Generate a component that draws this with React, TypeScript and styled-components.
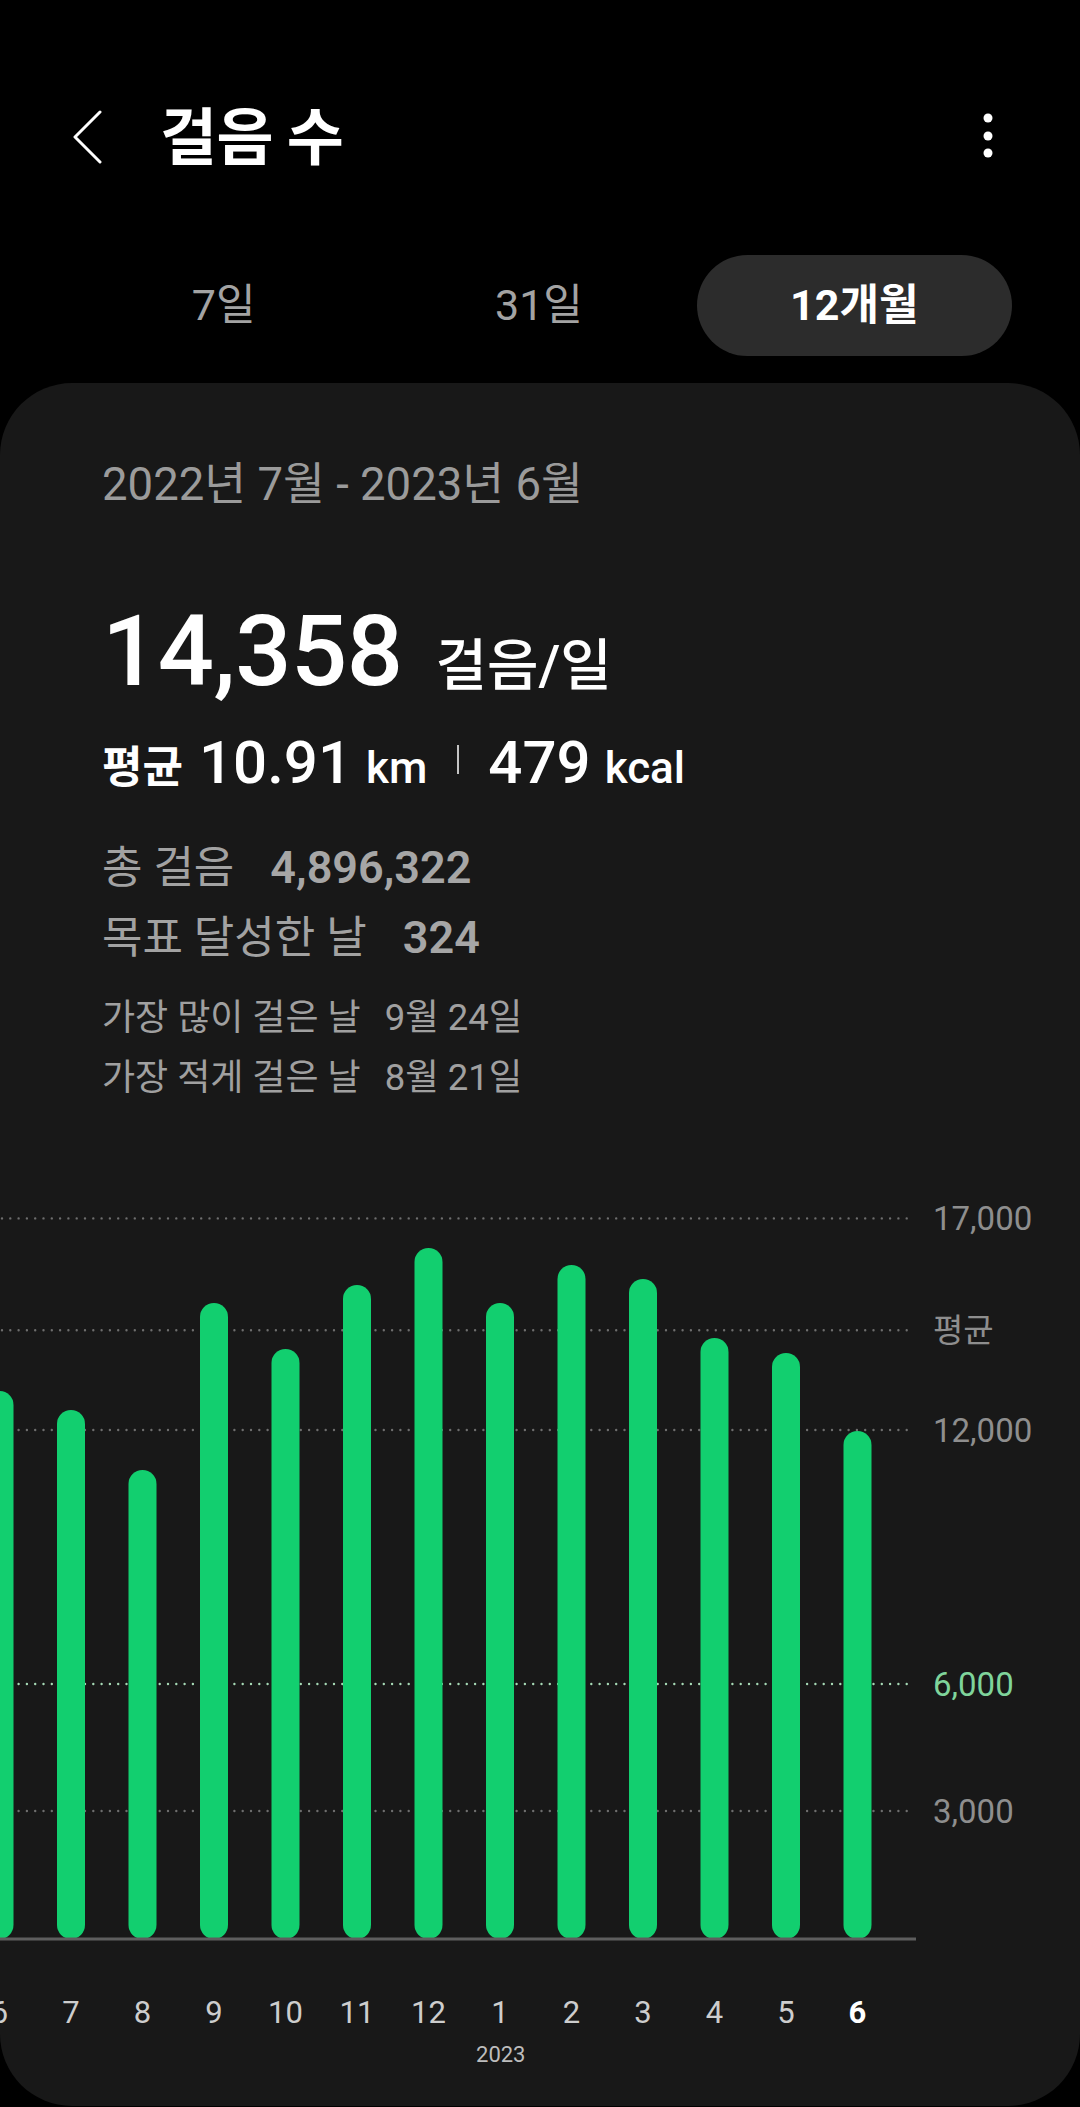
import React from 'react';
import styled, { createGlobalStyle } from 'styled-components';

const GlobalStyle = createGlobalStyle`
  html, body {
    margin: 0;
    padding: 0;
    background: #000;
  }
  body {
    font-family: Roboto, "Noto Sans CJK KR", sans-serif;
    color: #fff;
  }
  #root {
    min-height: 2107px;
  }
`;

// chart scale: px per step, baseline at y=749 inside the plot svg
const PLOT_BASE = 749;
const PX_PER_STEP = 0.04233;
const AVERAGE = 14358;
const BAR_STEP = 71.5;
const FIRST_CENTER = -0.5;

const months = [
  { label: '6', value: 12922 },
  { label: '7', value: 12473 },
  { label: '8', value: 11056 },
  { label: '9', value: 15001 },
  { label: '10', value: 13914 },
  { label: '11', value: 15426 },
  { label: '12', value: 16300 },
  { label: '1', value: 15001 },
  { label: '2', value: 15899 },
  { label: '3', value: 15568 },
  { label: '4', value: 14174 },
  { label: '5', value: 13820 },
  { label: '6', value: 11977 },
];

const gridLines = [
  { value: 17000, text: '17,000', goal: false },
  { value: AVERAGE, text: '평균', goal: false },
  { value: 12000, text: '12,000', goal: false },
  { value: 6000, text: '6,000', goal: true },
  { value: 3000, text: '3,000', goal: false },
];

const toY = (v: number) => PLOT_BASE - v * PX_PER_STEP;

function App() {
  return (
    <>
      <GlobalStyle />
      <Page>
        <Header>
          <BackButton aria-label="뒤로">
            <svg width="32" height="54" viewBox="0 0 32 54">
              <path
                d="M28 2 L3 27 L28 52"
                fill="none"
                stroke="#fff"
                strokeWidth="3"
                strokeLinecap="round"
                strokeLinejoin="round"
              />
            </svg>
          </BackButton>
          <Title>걸음 수</Title>
          <MoreButton aria-label="더보기">
            <svg width="12" height="48" viewBox="0 0 12 48">
              <circle cx="6" cy="6" r="4.5" fill="#fff" />
              <circle cx="6" cy="24" r="4.5" fill="#fff" />
              <circle cx="6" cy="41" r="4.5" fill="#fff" />
            </svg>
          </MoreButton>
        </Header>

        <Tabs>
          <Tab>7일</Tab>
          <Tab>31일</Tab>
          <Tab $active>12개월</Tab>
        </Tabs>

        <Card>
          <Summary>
            <DateRange>2022년 7월 - 2023년 6월</DateRange>

            <HeadlineRow>
              <BigNumber>14,358</BigNumber>
              <BigUnit>걸음/일</BigUnit>
            </HeadlineRow>

            <StatsRow>
              <StatLabel>평균</StatLabel>
              <StatValue>10.91</StatValue>
              <StatUnit>km</StatUnit>
              <Divider />
              <StatValue>479</StatValue>
              <StatUnit>kcal</StatUnit>
            </StatsRow>

            <TotalRow $first>
              <TotalLabel>총 걸음</TotalLabel>
              <TotalValue>4,896,322</TotalValue>
            </TotalRow>
            <TotalRow>
              <TotalLabel>목표 달성한 날</TotalLabel>
              <TotalValue>324</TotalValue>
            </TotalRow>

            <ExtremeRow $first>
              <span>가장 많이 걸은 날</span>
              <ExtremeDate>9월 24일</ExtremeDate>
            </ExtremeRow>
            <ExtremeRow>
              <span>가장 적게 걸은 날</span>
              <ExtremeDate>8월 21일</ExtremeDate>
            </ExtremeRow>
          </Summary>

          <Plot width="1080" height="755" viewBox="0 0 1080 755">
            {gridLines.map((g) => (
              <line
                key={g.text}
                x1="2"
                x2="912"
                y1={toY(g.value)}
                y2={toY(g.value)}
                stroke={g.goal ? '#a6d9b5' : '#6e6e6e'}
                strokeWidth="2.4"
                strokeDasharray="0 8.3"
                strokeLinecap="round"
              />
            ))}
            {months.map((m, i) => {
              const cx = FIRST_CENTER + i * BAR_STEP;
              const top = toY(m.value);
              return (
                <rect
                  key={i}
                  x={cx - 14}
                  y={top}
                  width="28"
                  height={750 - top}
                  rx="14"
                  fill="#12cf6f"
                />
              );
            })}
            <line x1="0" x2="916" y1="750" y2="750" stroke="#5e5e5e" strokeWidth="3" />
            {gridLines.map((g) => (
              <text
                key={g.text}
                x="933"
                y={toY(g.value) + 12}
                fontSize="33"
                fontFamily='Roboto, "Noto Sans CJK KR", sans-serif'
                fill={g.goal ? '#7fd49b' : '#8e8e8e'}
              >
                {g.text}
              </text>
            ))}
          </Plot>

          <MonthRow>
            {months.map((m, i) => (
              <MonthLabel key={i} $current={i === months.length - 1}>
                {m.label}
              </MonthLabel>
            ))}
          </MonthRow>
          <YearRow>
            <YearLabel>2023</YearLabel>
          </YearRow>
        </Card>
      </Page>
    </>
  );
}

export default App;

const Page = styled.div`
  width: 1080px;
  display: flex;
  flex-direction: column;
`;

const Header = styled.header`
  height: 120px;
  margin-top: 80px;
  padding: 0 86px 0 72px;
  display: flex;
  align-items: center;
`;

const BackButton = styled.div`
  width: 32px;
  height: 54px;
  display: flex;
  margin-top: -6px;
`;

const Title = styled.h1`
  margin: 0 0 14px 56px;
  font-family: "Noto Sans CJK KR", sans-serif;
  font-size: 62px;
  font-weight: 700;
  line-height: 1;
  letter-spacing: -0.5px;
  flex: 1;
`;

const MoreButton = styled.div`
  width: 12px;
  height: 48px;
  display: flex;
  margin-top: -8px;
`;

const Tabs = styled.nav`
  margin-top: 55px;
  padding: 0 68px 0 66px;
  display: grid;
  grid-template-columns: repeat(3, 1fr);
  height: 101px;
`;

const Tab = styled.div<{ $active?: boolean }>`
  display: flex;
  align-items: center;
  justify-content: center;
  border-radius: 51px;
  font-size: 43px;
  line-height: 1;
  font-weight: ${(p) => (p.$active ? 700 : 400)};
  color: ${(p) => (p.$active ? '#fff' : '#a3a3a3')};
  background: ${(p) => (p.$active ? '#2c2c2c' : 'transparent')};
`;

const Card = styled.section`
  margin-top: 27px;
  background: #181818;
  border-radius: 72px;
  overflow: hidden;
  padding: 79px 0 40px;
`;

const Summary = styled.div`
  padding-left: 102px;
`;

const DateRange = styled.div`
  font-size: 45.5px;
  line-height: 1;
  color: #9b9b9b;
`;

const HeadlineRow = styled.div`
  margin-top: 94px;
  display: flex;
  align-items: baseline;
`;

const BigNumber = styled.span`
  font-size: 99px;
  line-height: 1;
  font-weight: 500;
  letter-spacing: -0.5px;
`;

const BigUnit = styled.span`
  margin-left: 33px;
  font-size: 56px;
  line-height: 1;
  font-weight: 500;
`;

const StatsRow = styled.div`
  margin-top: 32px;
  display: flex;
  align-items: baseline;
`;

const StatLabel = styled.span`
  font-size: 44px;
  line-height: 1;
  font-weight: 700;
  margin-right: 16px;
`;

const StatValue = styled.span`
  font-size: 60px;
  line-height: 1;
  font-weight: 500;
`;

const StatUnit = styled.span`
  font-size: 44px;
  line-height: 1;
  font-weight: 500;
  margin-left: 14px;
`;

const Divider = styled.span`
  align-self: flex-start;
  width: 2px;
  height: 29px;
  margin: 12px 29px 0 30px;
  background: #c4c4c4;
`;

const TotalRow = styled.div<{ $first?: boolean }>`
  margin-top: ${(p) => (p.$first ? '52px' : '25px')};
  display: flex;
  align-items: baseline;
  color: #a2a2a2;
`;

const TotalLabel = styled.span`
  font-size: 44px;
  line-height: 1;
`;

const TotalValue = styled.span`
  margin-left: 36px;
  font-size: 45px;
  line-height: 1;
  font-weight: 600;
  color: #a6a6a6;
`;

const ExtremeRow = styled.div<{ $first?: boolean }>`
  margin-top: ${(p) => (p.$first ? '40px' : '24px')};
  display: flex;
  align-items: baseline;
  font-size: 36px;
  line-height: 1;
  color: #a0a0a0;
`;

const ExtremeDate = styled.span`
  margin-left: 24px;
  font-size: 36.5px;
`;

const Plot = styled.svg`
  display: block;
  margin-top: 92px;
`;

const MonthRow = styled.div`
  margin-top: 53px;
  margin-left: -36.25px;
  display: flex;
`;

const MonthLabel = styled.span<{ $current?: boolean }>`
  flex: 0 0 71.5px;
  text-align: center;
  font-size: 31px;
  line-height: 1;
  font-weight: ${(p) => (p.$current ? 700 : 400)};
  color: ${(p) => (p.$current ? '#fff' : '#cdcdcd')};
`;

const YearRow = styled.div`
  margin-top: 16px;
  display: flex;
`;

const YearLabel = styled.span`
  margin-left: 465px;
  width: 71.5px;
  text-align: center;
  font-size: 22px;
  line-height: 1;
  color: #bdbdbd;
`;
